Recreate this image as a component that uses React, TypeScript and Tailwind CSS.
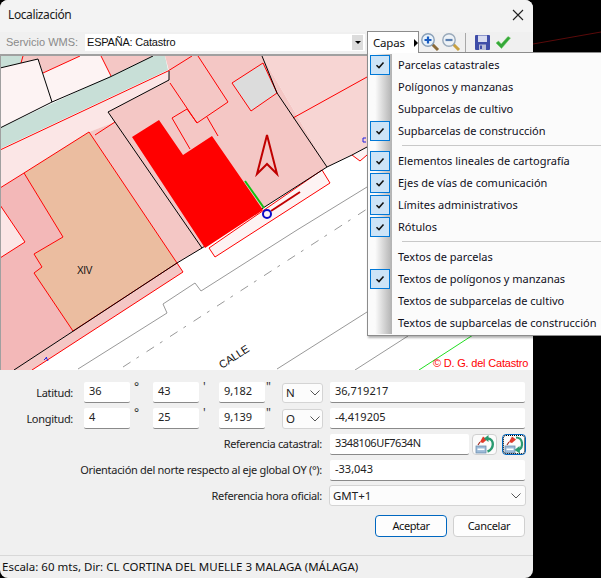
const ui = "font-['Noto_Sans',sans-serif]";
const arial = "font-['Liberation_Sans',sans-serif]";

const layers: ({ label: string; on: boolean } | null)[] = [
  { label: "Parcelas catastrales", on: true },
  { label: "Polígonos y manzanas", on: false },
  { label: "Subparcelas de cultivo", on: false },
  { label: "Supbarcelas de construcción", on: true },
  null,
  { label: "Elementos lineales de cartografía", on: true },
  { label: "Ejes de vías de comunicación", on: true },
  { label: "Límites administrativos", on: true },
  { label: "Rótulos", on: true },
  null,
  { label: "Textos de parcelas", on: false },
  { label: "Textos de polígonos y manzanas", on: true },
  { label: "Textos de subparcelas de cultivo", on: false },
  { label: "Textos de supbarcelas de construcción", on: false },
];

const gutter = "w-[24px] shrink-0 bg-linear-to-r from-[#fbfbfb] from-30% to-[#b2b2b2]";

function LayerMenu() {
  return (
    <div className="absolute left-[367px] top-[31px] z-10">
      <div className={`relative z-10 -mb-px flex h-[22px] w-[52px] items-center border border-b-0 border-[#8c8c8c] bg-white pl-[5px] text-[11.5px] tracking-[-0.2px] text-[#111] ${ui}`}>
        Capas
        <span className="ml-[9px] h-0 w-0 border-y-[4px] border-l-[4px] border-y-transparent border-l-black" />
      </div>
      <div className={`w-[240px] border border-[#8c8c8c] bg-[#fbfbfb] pb-px pt-px shadow-[1px_2px_2px_rgba(0,0,0,0.3)] ${ui}`}>
        {layers.map((item, i) =>
          item ? (
            <div key={i} className="flex h-[22px] items-stretch">
              <div className={`${gutter} flex items-center pl-[2px]`}>
                {item.on && (
                  <span className="flex h-[20px] w-[20px] items-center justify-center border border-[#0078d7] bg-[#cde4f7]">
                    <svg width="10" height="10" viewBox="0 0 10 10" fill="none" stroke="#111" strokeWidth="1.5">
                      <path d="M1.5 5.2 L4 7.6 L8.5 2.4" />
                    </svg>
                  </span>
                )}
              </div>
              <span className="flex items-center whitespace-nowrap pl-[6px] text-[11px] text-[#10101c]">
                {item.label}
              </span>
            </div>
          ) : (
            <div key={i} className="flex h-[8px]">
              <div className={gutter} />
              <div className="ml-[10px] mt-[3px] h-px flex-1 bg-[#c8c8c8]" />
            </div>
          ),
        )}
      </div>
    </div>
  );
}

function MapView() {
  const r = "#f00";
  return (
    <div className="h-[314px] border-l border-[#a0a0a0] bg-white">
      <svg width="532" height="314" viewBox="1 56 532 314" className="block">
        {/* fondos de parcela */}
        <polygon points="262,56 533,56 533,147 367,147 327,167" fill="#f7d5d3" />
        <polygon points="352,155 360,161 367,155 367,148" fill="#fdf3f3" />
        <polygon points="0,56 23,56 21,63 0,68" fill="#c8dfd7" />
        <polygon points="23,56 80,56 43,73 38,59 21,63" fill="#f4c7c5" />
        <polygon points="0,68 38,59 52,102 0,128" fill="#fdf3f3" />
        <polygon points="43,73 80,56 101,56 111,76 52,102" fill="#fdf3f3" />
        <polygon points="101,56 153,56 111,76" fill="#f4c7c5" />
        <polygon points="0,128 153,56 165,56 168,70 0,149" fill="#c8dfd7" />
        <polygon points="0,150 168,71 169,80 108,112 115,122 89,132 0,188" fill="#fbe6e6" />
        <polygon points="165,56 262,56 327,167 263,208 202,248 108,112 169,80 169,71" fill="#f4c7c5" />
        <polygon points="89,132 115,122 202,248 177,263" fill="#f4c7c5" />
        <polygon points="0,188 24,173 63,237 34,254 42,267 34,273 73,331 14,370 0,370" fill="#f3b8b8" />
        <polygon points="0,205 25,242 0,258" fill="#fbe6e6" />
        <polygon points="14,370 177,263 183,272 32,370" fill="#f4c7c5" />
        <polygon points="89,132 24,173 63,237 34,254 42,267 34,273 73,331 177,263" fill="#ebbda0" stroke={r} />
        <polygon points="232,83 263,63 277,93 251,111" fill="#dcdcdc" stroke={r} />
        <polygon points="209,248 215,257 330,183 322,170" fill="#fdf3f3" stroke={r} />

        {/* lineas rojas */}
        <g fill="none" stroke={r}>
          <polyline points="0,150 168,71 192,56" />
          <polyline points="43,73 80,56" />
          <polyline points="101,56 111,76" />
          <polyline points="23,56 21,63" />
          <polyline points="170,83 197,123 228,102 198,56" />
          <polyline points="172,118 187,109 197,123" />
          <polyline points="172,118 190,149" />
          <polyline points="207,117 218,136" />
          <polyline points="95,135 115,122" />
          <polyline points="0,188 24,173" />
          <polyline points="0,205 25,242 0,258" />
          <polyline points="32,370 183,272 177,263" />
          <polyline points="293,118 367,77" />
          <polyline points="352,155 360,161 367,155" />
        </g>

        {/* lineas negras */}
        <g fill="none" stroke="#000">
          <polyline points="0,68 38,59 52,102" />
          <polyline points="0,128 52,102 110,77 153,56" />
          <polyline points="169,71 169,80 108,112 202,248" />
          <polyline points="262,56 277,93 327,167" />
          <polyline points="14,370 177,263 202,248 263,208 327,167 352,155 367,147" />
        </g>

        {/* calle */}
        <g fill="none" stroke="#999">
          <polyline points="78,369 167,313 163,304 195,283 201,291 297,230 367,187" />
          <polyline points="123,367 367,209" strokeDasharray="9 7 3 9" />
          <polyline points="277,369 367,312" />
        </g>

        <polygon points="132,137 159,120 183,155 212,136 263,210 205,248" fill="#f00" />
        <path d="M245 181 L264 208" stroke="#10c010" strokeWidth="2" />
        <path d="M271 211 L300 192" stroke="#c00000" strokeWidth="2" />
        <circle cx="267" cy="214" r="4" fill="none" stroke="#0a0ac8" strokeWidth="2" />
        <polygon points="267,135 277,174 267,164 257,174" fill="none" stroke="#c00000" strokeWidth="2" />
        <path d="M46 357 L48 361 M44 360 L47 357" stroke="#2020e0" fill="none" />
        <path d="M366 138 L363 138 L363 142 L366 142" stroke="#2020e0" fill="none" />

        <text x="77" y="274" fontSize="10" fill="#111" fontFamily="Liberation Sans">XIV</text>
        <text x="222" y="369" fontSize="11" fill="#111" transform="rotate(-33 222 369)" fontFamily="Liberation Sans">CALLE</text>
        <path d="M419 370 L473 335" stroke="#22dd22" />
        <path d="M355 370 L408 336" stroke="#999" />
        <text x="433" y="367" fontSize="11" letterSpacing="-0.2" fill="#f00" fontFamily="Liberation Sans">© D. G. del Catastro</text>
      </svg>
    </div>
  );
}

function Field({ value, className }: { value: string; className: string }) {
  return (
    <div className={`h-[21px] rounded-[2px] border-b border-[#8a8a8a] bg-white pl-[5px] text-[11px] leading-[18px] tracking-normal text-[#222] ${className}`}>
      {value}
    </div>
  );
}

function Chevron() {
  return (
    <svg width="10" height="6" viewBox="0 0 10 6" fill="none" stroke="#555" className="shrink-0">
      <path d="M0.5 0.5 L5 5 L9.5 0.5" />
    </svg>
  );
}

function Combo({ value, className }: { value: string; className: string }) {
  return (
    <div className={`flex items-center justify-between rounded-[3px] border border-[#d4d4d4] bg-[#fcfcfc] text-[11.5px] tracking-normal text-[#222] ${className}`}>
      {value}
      <Chevron />
    </div>
  );
}

function CoordRow({ label, d, m, s, hemi, dec }: { label: string; d: string; m: string; s: string; hemi: string; dec: string }) {
  const mark = "pt-[1px] text-left text-[12px] leading-[8px] text-[#333]";
  return (
    <div className="flex items-start">
      <div className="mr-[11px] w-[73px] pt-[1px] text-right leading-[20px]">{label}</div>
      <Field value={d} className="w-[46px]" />
      <span className={`w-[23px] pl-[4px] ${mark}`}>°</span>
      <Field value={m} className="w-[46px]" />
      <span className={`w-[20px] pl-[4px] ${mark}`}>'</span>
      <Field value={s} className="w-[46px]" />
      <span className={`w-[17px] pl-[1px] ${mark}`}>"</span>
      <Combo value={hemi} className="mt-[1px] h-[20px] w-[41px] pl-[3px] pr-[2px]" />
      <Field value={dec} className="ml-[7px] w-[195px]" />
    </div>
  );
}

function LabeledRow({ label, children }: { label: string; children: React.ReactNode }) {
  return (
    <div className="flex items-center">
      <div className="mr-[8px] w-[322px] text-right">{label}</div>
      {children}
    </div>
  );
}

function PinIcon({ loop }: { loop?: boolean }) {
  return (
    <svg width="20" height="19" viewBox="0 0 20 19">
      <path d="M5 7 L8 1.5 L12 4.5 L8 8 Z" fill="#e03a2a" />
      <path d="M5 7 L3 10" stroke="#a02a20" strokeWidth="1.2" />
      <rect x="1" y="11" width="10" height="7" fill="#9dbbd8" stroke="#6f8fae" strokeWidth="0.8" />
      <rect x="2.5" y="13.5" width="7" height="1.6" fill="#fff" />
      {loop ? (
        <>
          <path d="M12 2.5 C19 2.5 20 12 14.5 15" fill="none" stroke="#2a9a70" strokeWidth="2.2" />
          <path d="M10.5 15 L15.5 11 L16 18.5 Z" fill="#2a9a70" />
        </>
      ) : (
        <>
          <path d="M13 3.5 C19.5 4 19.5 14 12.5 16.5" fill="none" stroke="#2a9a70" strokeWidth="2.4" />
          <path d="M9 3.5 L13.5 0 L13.5 7 Z" fill="#2a9a70" />
        </>
      )}
    </svg>
  );
}

function ToolIcons() {
  return (
    <div className="flex items-center">
      <svg width="20" height="20" viewBox="0 0 20 20">
        <path d="M12 12 L18 18" stroke="#8a6a3a" strokeWidth="3" />
        <circle cx="8" cy="8" r="6.2" fill="#e8f2fb" stroke="#8aa0b8" strokeWidth="1.4" />
        <path d="M4.5 8 H11.5 M8 4.5 V11.5" stroke="#1a5cc0" strokeWidth="2.2" />
      </svg>
      <svg width="20" height="20" viewBox="0 0 20 20" className="ml-[1px]">
        <path d="M12 12 L18 18" stroke="#c8a040" strokeWidth="3" />
        <circle cx="8" cy="8" r="6.2" fill="#edf2f7" stroke="#9aaaba" strokeWidth="1.4" />
        <path d="M4.5 8 H11.5" stroke="#5a7fb0" strokeWidth="2.2" />
      </svg>
      <div className="ml-[4px] mr-[9px] h-[19px] w-px bg-[#a8a8a8]" />
      <svg width="15" height="15" viewBox="0 0 15 15">
        <rect x="0" y="0" width="15" height="15" rx="1" fill="#3f4da8" />
        <rect x="3" y="0.5" width="9" height="6.5" fill="#d8dcf0" />
        <rect x="4" y="9.5" width="7" height="5.5" fill="#b8bcd8" />
        <rect x="5" y="10.5" width="2" height="3.5" fill="#3f4da8" />
      </svg>
      <svg width="16" height="13" viewBox="0 0 16 13" className="ml-[5px]">
        <path d="M1 7 L3.5 5 L6.2 8 L13 0.5 L15.5 2 L6.5 12.5 Z" fill="#35a83a" stroke="#6fcf60" strokeWidth="0.5" />
      </svg>
    </div>
  );
}

export default function App() {
  return (
    <div className="relative flex h-[578px] w-[601px] overflow-hidden bg-black">
      <div className={`flex w-[533px] shrink-0 flex-col overflow-hidden rounded-[8px] bg-[#f0f0f0] text-[11px] tracking-[-0.3px] text-[#222] ${ui}`}>
        <div className="flex h-[32px] shrink-0 items-center justify-between bg-[#f3f3f3] pb-[3px] pl-[8px] pr-[9px] text-[12px] leading-none tracking-[-0.4px] text-[#1a1a1a]">
          Localización
          <svg width="12" height="12" viewBox="0 0 12 12" stroke="#222" strokeWidth="1.1">
            <path d="M1 1 L11 11 M11 1 L1 11" />
          </svg>
        </div>
        <div className="flex h-[24px] shrink-0 items-start border-b-2 border-[#a0a0a0] pt-[2px]">
          <span className={`ml-[6px] w-[79px] text-[11px] leading-[17px] tracking-normal text-[#8a8a8a] ${arial}`}>Servicio WMS:</span>
          <div className={`flex h-[17px] w-[280px] items-center justify-between bg-white pl-[2px] pr-[2px] text-[11px] tracking-[-0.2px] text-[#111] ${arial}`}>
            ESPAÑA: Catastro
            <span className="flex h-[15px] w-[11px] items-center justify-center bg-[#dcdcdc]">
              <span className="h-0 w-0 border-x-[3px] border-t-[3px] border-x-transparent border-t-black" />
            </span>
          </div>
          <div className="ml-[55px] mt-[-2px]">
            <ToolIcons />
          </div>
        </div>
        <MapView />
        <div className="flex flex-1 flex-col gap-[5px] pt-[12px]">
          <CoordRow label="Latitud:" d="36" m="43" s="9,182" hemi="N" dec="36,719217" />
          <CoordRow label="Longitud:" d="4" m="25" s="9,139" hemi="O" dec="-4,419205" />
          <LabeledRow label="Referencia catastral:">
            <Field value="3348106UF7634N" className="w-[139px] !tracking-[-0.4px]" />
            <button className="ml-[3px] flex h-[21px] w-[25px] items-center justify-center rounded-[4px] border border-[#d0d0d0] bg-[#fbfbfb]">
              <PinIcon />
            </button>
            <button className="ml-[5px] flex h-[21px] w-[24px] items-center justify-center rounded-[4px] border border-[#0067c0] bg-[#fbfbfb] outline-1 -outline-offset-2 outline-dotted outline-black">
              <PinIcon loop />
            </button>
          </LabeledRow>
          <LabeledRow label="Orientación del norte respecto al eje global OY (°):">
            <Field value="-33,043" className="w-[195px]" />
          </LabeledRow>
          <LabeledRow label="Referencia hora oficial:">
            <Combo value="GMT+1" className="-ml-px -mt-px h-[21px] w-[197px] pl-[3px] pr-[4px]" />
          </LabeledRow>
          <div className="mt-[4px] flex w-[525px] justify-end gap-[6px]">
            <button className="h-[22px] w-[72px] rounded-[4px] border border-[#0067c0] bg-[#fdfdfd] text-[11px] tracking-[-0.4px] text-[#111]">Aceptar</button>
            <button className="h-[22px] w-[72px] rounded-[4px] border border-[#d0d0d0] bg-[#fdfdfd] text-[11px] tracking-[-0.3px] text-[#111]">Cancelar</button>
          </div>
        </div>
        <div className="flex h-[23px] shrink-0 items-center border-t border-[#d8d8d8] pl-[2px] text-[11.5px] tracking-normal text-[#111]">
          Escala: 60 mts, Dir: CL CORTINA DEL MUELLE 3 MALAGA (MÁLAGA)
        </div>
      </div>
      <svg width="68" height="60" viewBox="533 0 68 60" className="shrink-0">
        <path d="M533 44 L601 32" stroke="#5a0a0a" />
      </svg>
      <LayerMenu />
    </div>
  );
}
